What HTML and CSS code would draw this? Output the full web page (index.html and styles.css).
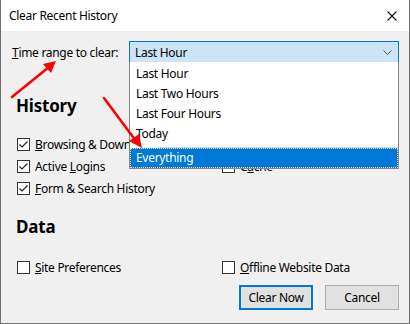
FILE: index.html
```html
<!DOCTYPE html>
<html>
<head>
<meta charset="utf-8">
<link rel="stylesheet" href="styles.css">
</head>
<body>
<div class="window">
  <div class="titlebar">
    <span class="title">Clear Recent History</span>
    <svg class="close" width="10" height="10" viewBox="0 0 10 10"><path d="M0.5 0.5 L9.5 9.5 M9.5 0.5 L0.5 9.5" stroke="#111" stroke-width="1.1" fill="none"/></svg>
  </div>
  <div class="content">
    <div class="range-row">
      <span class="label"><u>T</u>ime range to clear:</span>
      <div class="select-wrap">
        <div class="select">
          <span>Last Hour</span>
          <svg width="9" height="5" viewBox="0 0 9 5"><path d="M0.5 0.5 L4.5 4.5 L8.5 0.5" stroke="#555" stroke-width="1" fill="none"/></svg>
        </div>
        <div class="dropdown">
          <div class="opt">Last Hour</div>
          <div class="opt">Last Two Hours</div>
          <div class="opt">Last Four Hours</div>
          <div class="opt">Today</div>
          <div class="sep"></div>
          <div class="opt active">Everything</div>
        </div>
      </div>
    </div>

    <h2 class="heading history">History</h2>
    <div class="grid">
      <label class="cb"><span class="box checked"><svg width="11" height="11" viewBox="0 0 11 11"><path d="M1.5 5.5 L4 8 L9.5 2.5" stroke="#222" stroke-width="1.2" fill="none"/></svg></span><span><u>B</u>rowsing &amp; Download History</span></label>
      <label class="cb"><span class="box checked"><svg width="11" height="11" viewBox="0 0 11 11"><path d="M1.5 5.5 L4 8 L9.5 2.5" stroke="#222" stroke-width="1.2" fill="none"/></svg></span><span><u>C</u>ookies</span></label>
      <label class="cb"><span class="box checked"><svg width="11" height="11" viewBox="0 0 11 11"><path d="M1.5 5.5 L4 8 L9.5 2.5" stroke="#222" stroke-width="1.2" fill="none"/></svg></span><span>Active <u>L</u>ogins</span></label>
      <label class="cb"><span class="box"></span><span>C<u>a</u>che</span></label>
      <label class="cb"><span class="box checked"><svg width="11" height="11" viewBox="0 0 11 11"><path d="M1.5 5.5 L4 8 L9.5 2.5" stroke="#222" stroke-width="1.2" fill="none"/></svg></span><span><u>F</u>orm &amp; Search History</span></label>
    </div>

    <h2 class="heading data">Data</h2>
    <div class="grid">
      <label class="cb"><span class="box"></span><span><u>S</u>ite Preferences</span></label>
      <label class="cb"><span class="box"></span><span><u>O</u>ffline Website Data</span></label>
    </div>

    <div class="buttons">
      <button class="btn primary">Clear Now</button>
      <button class="btn">Cancel</button>
    </div>
  </div>

  <svg class="arrows" width="410" height="324" viewBox="0 0 410 324">
    <g stroke="#ff0000" stroke-width="2.6" fill="none" stroke-linecap="round">
      <path d="M12 97 L49 67"/>
      <path d="M104 98 L136 141"/>
    </g>
    <g fill="#ff0000">
      <path d="M56 61 L43 64 L51 73 Z"/>
      <path d="M142 148 L129 141 L139 134 Z"/>
    </g>
  </svg>
</div>
</body>
</html>
```

FILE: styles.css
```css
* { box-sizing: border-box; }
html, body { margin: 0; padding: 0; }
body {
  font-family: "Noto Sans", "Segoe UI", sans-serif;
  font-size: 12px;
  letter-spacing: -0.3px;
  color: #000;
}
.window {
  position: relative;
  width: 410px;
  height: 324px;
  background: #f0f0f0;
  border: 1px solid #707070;
  border-top: none;
  display: flex;
  flex-direction: column;
  overflow: hidden;
}
.titlebar {
  height: 31px;
  background: #fff;
  display: flex;
  align-items: center;
  justify-content: space-between;
  padding: 0 12px 0 8px;
}
.title { font-size: 12px; }
.close { margin-top: 1px; }
.content {
  padding: 10px 10px 0 11px;
  display: flex;
  flex-direction: column;
}
.range-row {
  display: flex;
  align-items: center;
  justify-content: space-between;
}
.select-wrap { position: relative; width: 270px; }
.select {
  height: 22px;
  border: 1px solid #0078d7;
  background: #cce4f7;
  display: flex;
  align-items: center;
  justify-content: space-between;
  padding: 0 6px 0 5px;
}
.dropdown {
  position: absolute;
  left: 0;
  top: 21px;
  width: 270px;
  background: #fff;
  border: 1px solid #828790;
  border-top: none;
  padding-top: 2px;
  z-index: 2;
}
.opt {
  height: 20px;
  line-height: 20px;
  padding-left: 6px;
}
.sep {
  height: 4px;
  margin-left: 28px;
  border-bottom: 1px solid #d8d8d8;
}
.opt.active {
  background: #0078d7;
  color: #fff;
  border: 1px dotted #f3e6a8;
  line-height: 18px;
  padding-left: 5px;
}
.heading {
  margin: 0;
  font-size: 17px;
  font-weight: bold;
  padding-left: 4px;
  line-height: 22px;
  letter-spacing: -0.2px;
}
.history { margin-top: 32px; }
.data { margin-top: 21px; }
.grid {
  display: grid;
  grid-template-columns: 205px 1fr;
  row-gap: 9px;
  padding-left: 5px;
}
.history + .grid { margin-top: 21px; }
.data + .grid { margin-top: 23px; }
.cb {
  display: flex;
  align-items: center;
  gap: 5px;
  height: 13px;
  white-space: nowrap;
}
.box {
  width: 13px;
  height: 13px;
  border: 1px solid #333;
  background: #fff;
  display: flex;
  align-items: center;
  justify-content: center;
  flex: none;
}
.buttons {
  display: flex;
  justify-content: flex-end;
  gap: 12px;
  margin-top: 11px;
}
.btn {
  font-family: inherit;
  font-size: 12px;
  letter-spacing: -0.3px;
  height: 25px;
  width: 74px;
  background: #e1e1e1;
  border: 1px solid #adadad;
  color: #000;
  padding: 0;
}
.btn.primary { border: 2px solid #0078d7; }
.arrows {
  position: absolute;
  left: -1px;
  top: 0;
  z-index: 5;
  pointer-events: none;
}
```
